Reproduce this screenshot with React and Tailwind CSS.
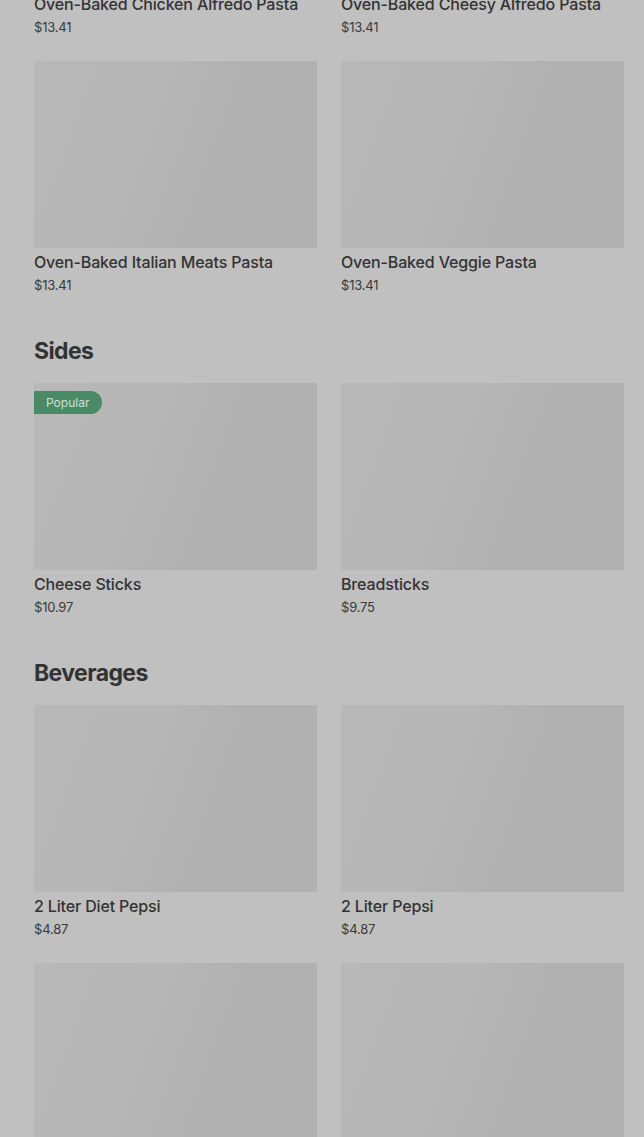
const sections = [
  {
    title: null,
    items: [
      { name: "Oven-Baked Chicken Alfredo Pasta", price: "$13.41" },
      { name: "Oven-Baked Cheesy Alfredo Pasta", price: "$13.41" },
      { name: "Oven-Baked Italian Meats Pasta", price: "$13.41" },
      { name: "Oven-Baked Veggie Pasta", price: "$13.41" },
    ],
  },
  {
    title: "Sides",
    items: [
      { name: "Cheese Sticks", price: "$10.97", popular: true },
      { name: "Breadsticks", price: "$9.75" },
    ],
  },
  {
    title: "Beverages",
    items: [
      { name: "2 Liter Diet Pepsi", price: "$4.87" },
      { name: "2 Liter Pepsi", price: "$4.87" },
      { name: "2 Liter Mountain Dew", price: "$4.87" },
      { name: "2 Liter Sierra Mist", price: "$4.87" },
    ],
  },
];

const ItemCard = ({ name, price, popular }) => (
  <div className="flex flex-col">
    <div className="relative h-[187px] w-full bg-[linear-gradient(110deg,#b8b8b8_0%,#b6b6b6_40%,#b1b1b1_60%,#b1b1b1_100%)]">
      {popular && (
        <span className="absolute left-0 top-2 rounded-r-full bg-[#4b8a67] py-[3px] pl-3 pr-[13px] text-[12px] leading-[17px] text-[#cfe0d5]">
          Popular
        </span>
      )}
    </div>
    <div className="mt-[2px] truncate text-[16px] font-medium leading-[24px] tracking-[-0.15px] text-[#333333]">
      {name}
    </div>
    <div className="text-[13px] leading-[22px] tracking-[-0.2px] text-[#3a3a3a]">{price}</div>
  </div>
);

export default function App() {
  return (
    <div className="h-[1137px] overflow-hidden bg-[#c0c0c0] font-['Inter','Liberation_Sans',sans-serif]">
      <div className="-mt-[197px] pl-[34px] pr-[20px]">
        {sections.map((section, i) => (
          <section key={i} className={i > 0 ? "mt-[39px]" : ""}>
            {section.title && (
              <h2 className="mb-[16px] text-[23px] font-bold leading-[32px] tracking-[-0.6px] text-[#333333]">
                {section.title}
              </h2>
            )}
            <div className="grid grid-cols-2 gap-x-[24px] gap-y-[23px]">
              {section.items.map((item) => (
                <ItemCard key={item.name} {...item} />
              ))}
            </div>
          </section>
        ))}
      </div>
    </div>
  );
}
